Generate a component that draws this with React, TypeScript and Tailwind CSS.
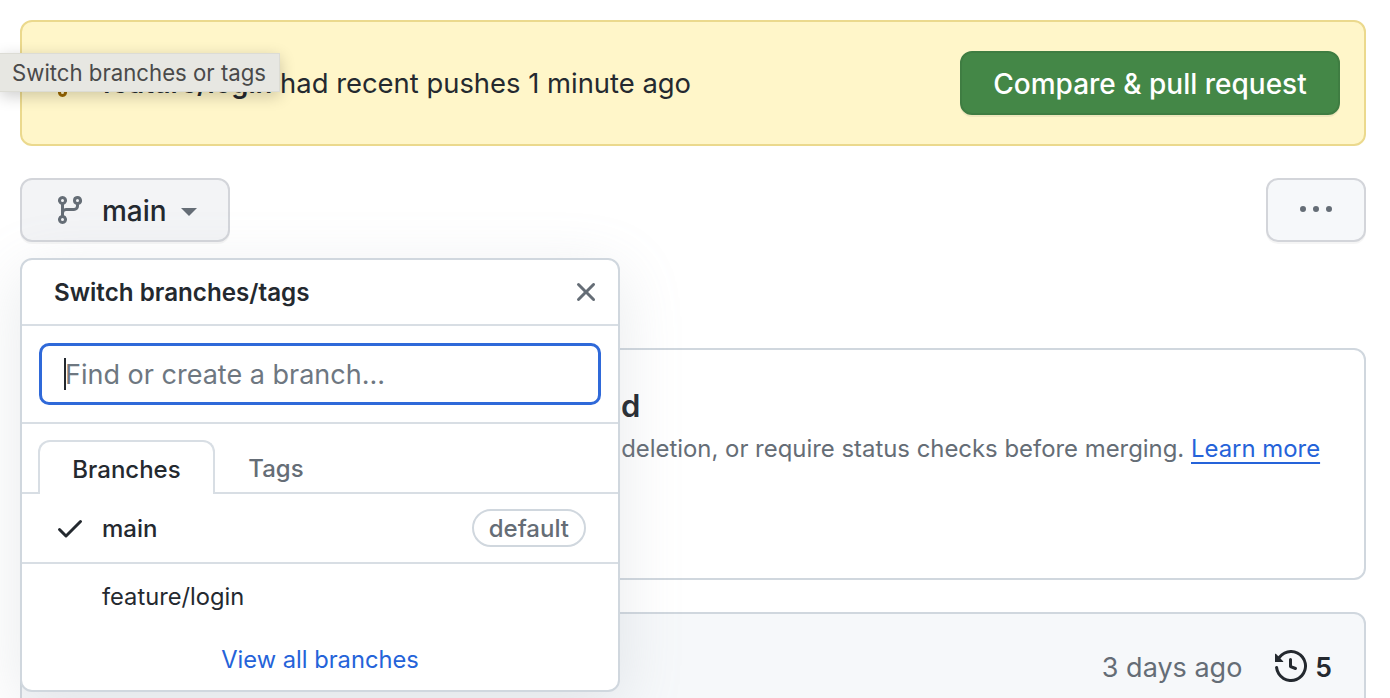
const branchIcon = "M9.5 3.25a2.25 2.25 0 1 1 3 2.122V6A2.5 2.5 0 0 1 10 8.5H6a1 1 0 0 0-1 1v1.128a2.251 2.251 0 1 1-1.5 0V5.372a2.25 2.25 0 1 1 1.5 0v1.836A2.493 2.493 0 0 1 6 7h4a1 1 0 0 0 1-1v-.628A2.25 2.25 0 0 1 9.5 3.25Zm-6 0a.75.75 0 1 0 1.5 0 .75.75 0 0 0-1.5 0Zm8.25-.75a.75.75 0 1 0 0 1.5.75.75 0 0 0 0-1.5ZM4.25 12a.75.75 0 1 0 0 1.5.75.75 0 0 0 0-1.5Z"
const checkIcon = "M13.78 4.22a.75.75 0 0 1 0 1.06l-7.25 7.25a.75.75 0 0 1-1.06 0L2.22 9.28a.751.751 0 0 1 .018-1.042.751.751 0 0 1 1.042-.018L6 10.94l6.72-6.72a.75.75 0 0 1 1.06 0Z"
const closeIcon = "M3.72 3.72a.75.75 0 0 1 1.06 0L8 6.94l3.22-3.22a.749.749 0 0 1 1.275.326.749.749 0 0 1-.215.734L9.06 8l3.22 3.22a.749.749 0 0 1-.326 1.275.749.749 0 0 1-.734-.215L8 9.06l-3.22 3.22a.751.751 0 0 1-1.042-.018.751.751 0 0 1-.018-1.042L6.94 8 3.72 4.78a.75.75 0 0 1 0-1.06Z"
const historyIcon = "m.427 1.927 1.215 1.215a8.002 8.002 0 1 1-1.6 5.685.75.75 0 1 1 1.493-.154 6.5 6.5 0 1 0 1.18-4.458l1.358 1.358A.25.25 0 0 1 3.896 6H.25A.25.25 0 0 1 0 5.75V2.104a.25.25 0 0 1 .427-.177ZM7.75 4a.75.75 0 0 1 .75.75v2.992l2.028.812a.75.75 0 0 1-.557 1.392l-2.5-1A.751.751 0 0 1 7 8.25v-3.5A.75.75 0 0 1 7.75 4Z"
const kebabIcon = "M8 9a1.5 1.5 0 1 0 0-3 1.5 1.5 0 0 0 0 3ZM1.5 9a1.5 1.5 0 1 0 0-3 1.5 1.5 0 0 0 0 3Zm13 0a1.5 1.5 0 1 0 0-3 1.5 1.5 0 0 0 0 3Z"

function Octicon({ d, className }: { d: string; className: string }) {
  return (
    <svg viewBox="0 0 16 16" fill="currentColor" className={className}>
      <path d={d} />
    </svg>
  )
}

export default function App() {
  return (
    <div className="relative h-[698px] w-[1390px] overflow-hidden bg-white pb-5 pl-5 pr-6 pt-5 font-['Inter',sans-serif] text-[#24292f]">
      {/* Recent pushes banner */}
      <div className="flex h-[126px] items-center justify-between rounded-xl border-2 border-[#ebd98d] bg-[#fff6c9] pl-8 pr-6">
        <div className="flex items-center gap-4 text-[27.4px]">
          <Octicon d={branchIcon} className="h-8 w-8 text-[#9a6700]" />
          <span className="pt-0.5">
            <span className="font-semibold">feature/login</span> had recent pushes 1 minute ago
          </span>
        </div>
        <button className="flex h-16 w-[380px] items-center justify-center rounded-xl border-2 border-[#3f7d42] bg-[#448747] pt-0.5 text-[28px] font-medium text-white shadow-[0_2px_0_rgba(0,0,0,0.06)]">
          Compare &amp; pull request
        </button>
      </div>

      {/* Branch toolbar */}
      <div className="mt-8 flex items-center justify-between">
        <button className="flex h-16 w-[210px] items-center rounded-xl border-2 border-[#d3d5da] bg-[#f3f4f6] pl-[32px] text-[28px] font-medium shadow-[0_2px_0_rgba(0,0,0,0.04)]">
          <Octicon d={branchIcon} className="h-8 w-8 text-[#656d76]" />
          <span className="ml-4 pt-0.5">main</span>
          <span className="ml-[14px] mt-1 h-0 w-0 border-x-8 border-t-8 border-x-transparent border-t-[#656d76]" />
        </button>
        <button className="flex h-16 w-[100px] items-center justify-center rounded-xl border-2 border-[#d3d5da] bg-[#f6f8fa] shadow-[0_2px_0_rgba(0,0,0,0.04)]">
          <Octicon d={kebabIcon} className="h-8 w-8 text-[#656d76]" />
        </button>
      </div>

      {/* Protect branch card */}
      <div className="mt-[106px] h-[232px] rounded-xl border-2 border-[#d0d7de] bg-white pl-[122px] pt-[36px]">
        <h2 className="ml-[8px] whitespace-nowrap text-[31px] font-semibold leading-10">Your main branch isn't protected</h2>
        <p className="ml-[5px] mt-[5px] whitespace-nowrap text-[23.9px] leading-9 text-[#656d76]">
          Protect this branch from force pushing or deletion, or require status checks before merging.{' '}
          <a className="text-[#2563d9] underline decoration-2 underline-offset-[5px]">Learn more</a>
        </p>
      </div>

      {/* Latest commit card */}
      <div className="mt-8 flex h-[120px] items-start justify-end rounded-xl border-2 border-[#d0d7de] bg-[#f6f8fa] pr-8 pt-[36px]">
        <span className="text-[27px] leading-9 text-[#656d76]">3 days ago</span>
        <Octicon d={historyIcon} className="ml-[33px] h-8 w-8" />
        <span className="-mt-px ml-2 text-[26.5px] font-semibold leading-9">5</span>
      </div>

      {/* Branch dropdown */}
      <div className="absolute left-5 top-[258px] flex h-[434px] w-[600px] flex-col rounded-xl border-2 border-[#d0d7de] bg-white shadow-[0_16px_64px_rgba(140,149,159,0.2)]">
        <div className="flex h-[66px] shrink-0 items-center justify-between border-b-2 border-[#d8dee4] pl-8 pr-4">
          <span className="pt-0.5 text-[24.2px] font-semibold">Switch branches/tags</span>
          <Octicon d={closeIcon} className="h-8 w-8 text-[#656d76]" />
        </div>
        <div className="flex h-[98px] shrink-0 items-center border-b-2 border-[#d8dee4] px-[17px]">
          <div className="flex h-[62px] w-full items-center rounded-[10px] border-[3px] border-[#2f69d9] pl-[22px]">
            <span className="h-8 w-0.5 bg-[#24292f]" />
            <span className="-ml-px pt-0.5 text-[27px] text-[#6e7781]">Find or create a branch...</span>
          </div>
        </div>
        <div className="flex h-[70px] shrink-0 items-end border-b-2 border-[#d8dee4] pl-4">
          <div className="-mb-0.5 flex h-[54px] w-[177px] items-center justify-center rounded-t-xl border-2 border-b-0 border-[#d8dee4] bg-white pt-1 text-2xl font-medium">
            Branches
          </div>
          <div className="flex h-[52px] w-[122px] items-center justify-center pt-1.5 text-2xl font-medium text-[#656d76]">Tags</div>
        </div>
        <div className="flex h-[70px] shrink-0 items-center border-b-2 border-[#d8dee4] pl-8 pr-8">
          <Octicon d={checkIcon} className="h-8 w-8" />
          <span className="ml-4 pt-0.5 text-2xl font-medium">main</span>
          <span className="ml-auto flex h-[38px] items-center rounded-full border-2 border-[#d0d7de] px-[15px] pt-0.5 text-2xl font-medium text-[#656d76]">default</span>
        </div>
        <div className="flex h-[66px] shrink-0 items-center pl-[80px] text-[23.7px]">feature/login</div>
        <div className="flex h-[57px] shrink-0 items-center justify-center pt-0.5 text-[23.7px] text-[#2563d9]">View all branches</div>
      </div>

      {/* Native tooltip */}
      <div className="absolute left-0 top-[53px] flex h-[39px] w-[280px] items-center border-y border-r border-[#dcdcd5] bg-[#e7e7e2] pl-3 text-[22.2px] text-[#4a4a4a] shadow-[0_4px_16px_rgba(0,0,0,0.2)]">
        Switch branches or tags
      </div>
    </div>
  )
}
